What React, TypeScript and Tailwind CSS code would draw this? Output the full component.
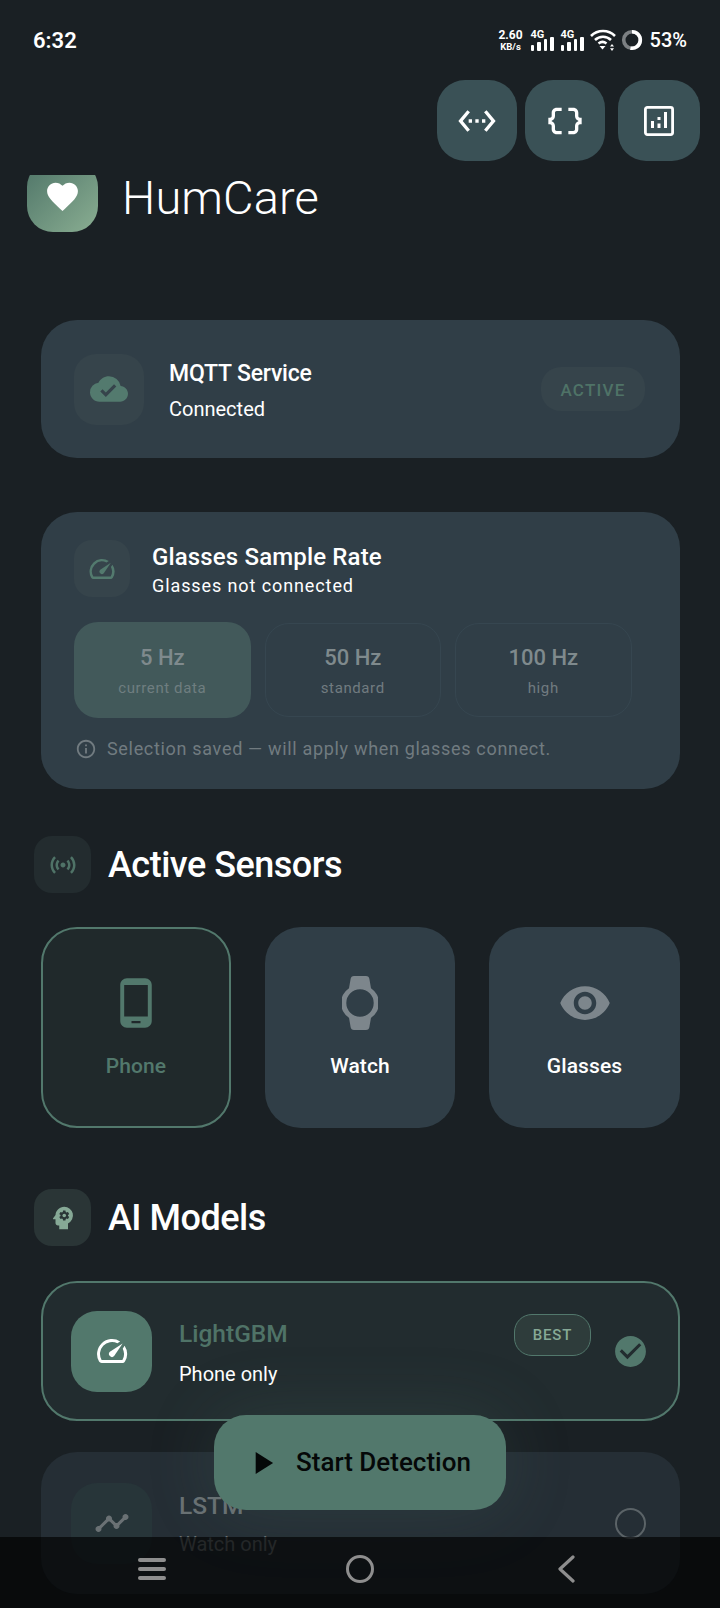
import {
  MdCheckCircle,
  MdCloudDone,
  MdDataObject,
  MdFavorite,
  MdInfoOutline,
  MdPhoneAndroid,
  MdPlayArrow,
  MdPsychology,
  MdSensors,
  MdSettingsEthernet,
  MdSpeed,
  MdTimeline,
  MdVisibility,
} from "react-icons/md";

const font = { fontFamily: "Roboto, sans-serif" };

function Signal() {
  return (
    <div className="relative flex h-[21px] w-[24px] items-end gap-[3px]">
      <span className="absolute top-0 left-0 text-[11px] leading-[9px] font-bold text-white">4G</span>
      <div className="h-[6px] w-[3.5px] rounded-[1px] bg-white" />
      <div className="h-[9px] w-[3.5px] rounded-[1px] bg-white" />
      <div className="h-[12px] w-[3.5px] rounded-[1px] bg-white" />
      <div className="h-[14px] w-[3.5px] rounded-[1px] bg-white" />
    </div>
  );
}

function StatusBar() {
  return (
    <div className="flex h-[80px] items-center justify-between pr-[33px] pl-[33px]">
      <span className="text-[22px] font-semibold text-white">6:32</span>
      <div className="flex items-center">
        <div className="mr-[9px] flex w-[22px] flex-col items-center font-bold text-white">
          <span className="text-[12px] leading-[12px]">2.60</span>
          <span className="mt-px text-[9.5px] leading-[10px]">KB/s</span>
        </div>
        <div className="mr-[6px]">
          <Signal />
        </div>
        <div className="mr-[5px]">
          <Signal />
        </div>
        <svg width="26" height="22" viewBox="0 0 26 22" className="mr-[5px]">
          <path d="M1 7a17 17 0 0 1 24 0" fill="none" stroke="white" strokeWidth="2.6" />
          <path d="M5 11a11.5 11.5 0 0 1 16 0" fill="none" stroke="white" strokeWidth="2.6" />
          <path d="M8.5 14.5a6.5 6.5 0 0 1 8 0" fill="none" stroke="white" strokeWidth="2.6" />
          <path d="M9.5 17h6l-3 3.5z" fill="white" />
          <path d="M22 15l2 2.4h-4zM22 22l2-2.8h-4z" fill="white" />
        </svg>
        <svg width="22" height="22" viewBox="0 0 22 22" className="mr-[7px]">
          <circle cx="11" cy="11" r="8.3" fill="none" stroke="#7c8083" strokeWidth="3.6" />
          <path d="M11 2.7A8.3 8.3 0 1 1 9.44 19.15" fill="none" stroke="white" strokeWidth="3.6" />
        </svg>
        <span className="text-[20px] font-medium text-white">53%</span>
      </div>
    </div>
  );
}

function AnalyticsIcon() {
  return (
    <svg width="30" height="30" viewBox="0 0 30 30" fill="white">
      <rect x="1.4" y="1.4" width="27.2" height="27.2" rx="2" fill="none" stroke="white" strokeWidth="2.8" />
      <rect x="7" y="15" width="3" height="7" />
      <rect x="13.5" y="11" width="3" height="3" />
      <rect x="13.5" y="17.5" width="3" height="4.5" />
      <rect x="20" y="6" width="3" height="16" />
    </svg>
  );
}

function TopActions() {
  const cls = "flex h-[81px] w-[80px] items-center justify-center rounded-[28px] bg-[#3a5156] text-white";
  return (
    <div className="flex justify-end pr-[20px]">
      <div className={cls}>
        <MdSettingsEthernet size={40} />
      </div>
      <div className={`${cls} ml-[8px]`}>
        <MdDataObject size={40} />
      </div>
      <div className={`${cls} ml-[13px] w-[82px]`}>
        <AnalyticsIcon />
      </div>
    </div>
  );
}

function Brand() {
  return (
    <div className="mt-[14px] flex h-[57px] items-center pl-[27px]">
      <div className="h-[57px] w-[71px] overflow-hidden">
        <div className="-mt-[14px] flex h-[71px] w-[71px] items-center justify-center rounded-[26px] bg-gradient-to-br from-[#4f7568] to-[#8aae92] text-white">
          <MdFavorite size={37} />
        </div>
      </div>
      <span className="-mt-[12px] ml-[24px] text-[47px] leading-none font-light tracking-[0.1px] text-white">
        HumCare
      </span>
    </div>
  );
}

function MqttCard() {
  return (
    <div className="mt-[88px] flex h-[138px] items-center rounded-[36px] bg-[#303e47] pr-[35px] pl-[33px]">
      <div className="flex h-[71px] w-[70px] items-center justify-center rounded-[22px] bg-[#36444b] text-[#537a6e]">
        <MdCloudDone size={38} />
      </div>
      <div className="ml-[25px] flex-1">
        <div className="mt-[2px] text-[23px] leading-[28px] font-medium tracking-[-0.2px] text-white">MQTT Service</div>
        <div className="mt-[9px] text-[20px] leading-[24px] text-white">Connected</div>
      </div>
      <div className="flex h-[44px] w-[104px] items-center justify-center rounded-[20px] bg-[#36444b] pt-[3px] text-[17px] font-medium tracking-[1.2px] text-[#4f7367]">
        ACTIVE
      </div>
    </div>
  );
}

const rates = [
  { hz: "5 Hz", sub: "current data", active: true },
  { hz: "50 Hz", sub: "standard", active: false },
  { hz: "100 Hz", sub: "high", active: false },
];

function SampleRateCard() {
  return (
    <div className="mt-[54px] h-[277px] rounded-[36px] bg-[#303e47] pt-[28px] pl-[33px]">
      <div className="flex">
        <div className="flex h-[57px] w-[56px] items-center justify-center rounded-[18px] bg-[#36444b] text-[#537a6e]">
          <MdSpeed size={30} />
        </div>
        <div className="ml-[22px] pt-[2px]">
          <div className="text-[24px] leading-[30px] font-medium tracking-[0.15px] text-white">Glasses Sample Rate</div>
          <div className="mt-px text-[18px] leading-[26px] tracking-[0.9px] text-white">Glasses not connected</div>
        </div>
      </div>
      <div className="mt-[23px] flex items-center gap-[14px]">
        {rates.map((r) =>
          r.active ? (
            <div key={r.hz} className="flex h-[96px] w-[176.5px] flex-col items-center rounded-[24px] bg-[#42595a] pt-[23px]">
              <span className="text-[22px] leading-[26px] font-medium text-[#7f8a8d]">{r.hz}</span>
              <span className="mt-[7px] text-[15px] leading-[20px] tracking-[0.6px] text-[#6f7e80]">{r.sub}</span>
            </div>
          ) : (
            <div key={r.hz} className="flex h-[94px] w-[176.5px] flex-col items-center rounded-[24px] border border-[#364650] pt-[21px]">
              <span className="text-[22px] leading-[26px] font-medium text-[#7f8a8d]">{r.hz}</span>
              <span className="mt-[7px] text-[15px] leading-[20px] tracking-[0.6px] text-[#717b80]">{r.sub}</span>
            </div>
          ),
        )}
      </div>
      <div className="mt-[18px] flex items-center text-[#717b80]">
        <MdInfoOutline size={22} className="ml-px" />
        <span className="ml-[10px] text-[18px] leading-[26px] tracking-[0.68px]">
          Selection saved — will apply when glasses connect.
        </span>
      </div>
    </div>
  );
}

function SectionHeader({ title, icon, box }: { title: string; icon: React.ReactNode; box: string }) {
  return (
    <div className="-ml-[7px] flex h-[57px] items-center">
      <div className={`flex h-[57px] w-[57px] items-center justify-center rounded-[18px] ${box}`}>{icon}</div>
      <h2 className="ml-[17px] text-[36px] leading-none font-medium tracking-[-0.5px] text-white">{title}</h2>
    </div>
  );
}

function WatchIcon() {
  return (
    <svg width="36" height="54" viewBox="0 0 36 54">
      <path
        fillRule="evenodd"
        fill="#7d868c"
        d="M12 0h12a3.5 3.5 0 0 1 3.4 3l1.6 9.2a17.8 17.8 0 0 1 0 29.6L27.4 51a3.5 3.5 0 0 1-3.4 3H12a3.5 3.5 0 0 1-3.4-3L7 41.8a17.8 17.8 0 0 1 0-29.6L8.6 3A3.5 3.5 0 0 1 12 0zM18 13.3a13.7 13.7 0 1 0 0 27.4 13.7 13.7 0 0 0 0-27.4z"
      />
    </svg>
  );
}

function SensorCard({
  label,
  icon,
  active,
  width,
}: {
  label: string;
  icon: React.ReactNode;
  active?: boolean;
  width: string;
}) {
  return (
    <div
      className={`flex h-[201px] flex-col items-center rounded-[36px] ${width} ${
        active ? "border-2 border-[#52786c] bg-[#20292b] pt-[42px] text-[#52786c]" : "bg-[#303e47] pt-[44px] text-white"
      }`}
    >
      <div className={`flex h-[64px] items-center justify-center ${active ? "" : "text-[#7d868c]"}`}>{icon}</div>
      <span className="mt-[17px] text-[21px] leading-[28px] font-medium tracking-[0.1px]">{label}</span>
    </div>
  );
}

function ModelCards() {
  return (
    <>
      <div className="relative mt-[35px] flex h-[140px] items-center rounded-[36px] border-2 border-[#52786c] bg-[#222c2f] pr-[29px] pl-[28px]">
        <div className="flex h-[81px] w-[81px] items-center justify-center rounded-[26px] bg-[#52786c] text-white">
          <MdSpeed size={36} />
        </div>
        <div className="ml-[27px] flex-1">
          <div className="mt-[2px] text-[24.5px] leading-[32px] font-medium text-[#4f7367]">LightGBM</div>
          <div className="mt-[12px] text-[20px] leading-[24px] text-white">Phone only</div>
        </div>
        <div className="-mt-[32px] mr-[21px] flex h-[42px] w-[77px] items-center justify-center rounded-[18px] border border-[#52786c] bg-[#2e3c3b] text-[15px] font-medium tracking-[0.8px] text-[#86a996]">
          BEST
        </div>
        <MdCheckCircle size={37} className="text-[#52786c]" />
      </div>
      <div className="mt-[31px] flex h-[142px] items-center rounded-[36px] bg-[#252e35] pr-[34px] pl-[30px]">
        <div className="flex h-[81px] w-[81px] items-center justify-center rounded-[26px] bg-[#273539] text-[#6a7174]">
          <MdTimeline size={36} />
        </div>
        <div className="ml-[27px] flex-1">
          <div className="text-[24.5px] leading-[32px] font-medium text-[#6a7174]">LSTM</div>
          <div className="mt-[10px] text-[20px] leading-[24px] text-[#6a7174]">Watch only</div>
        </div>
        <div className="h-[31px] w-[31px] rounded-full border-2 border-[#5b6367]" />
      </div>
    </>
  );
}

function NavBar() {
  return (
    <div className="absolute right-0 bottom-0 left-0 h-[71px] bg-black/65">
      <div className="flex h-full items-center pb-[7px]">
        <div className="ml-[138px] flex w-[28px] flex-col gap-[5px]">
          <div className="h-[4px] rounded-full bg-[#8e8e8e]" />
          <div className="h-[4px] rounded-full bg-[#8e8e8e]" />
          <div className="h-[4px] rounded-full bg-[#8e8e8e]" />
        </div>
        <div className="ml-[180px] h-[28px] w-[28px] rounded-full border-[3px] border-[#8e8e8e]" />
        <svg width="18" height="28" viewBox="0 0 18 28" className="ml-[183px]">
          <path d="M16 2L3 14l13 12" fill="none" stroke="#8e8e8e" strokeWidth="3.2" strokeLinecap="round" strokeLinejoin="round" />
        </svg>
      </div>
    </div>
  );
}

export default function App() {
  return (
    <div className="relative h-[1608px] w-[720px] overflow-hidden bg-[#1a2024]" style={font}>
      <StatusBar />
      <TopActions />
      <Brand />
      <div className="pr-[40px] pl-[41px]">
        <MqttCard />
        <SampleRateCard />
        <div className="mt-[47px]">
          <SectionHeader
            title="Active Sensors"
            box="bg-[#232c2f] text-[#4f7367]"
            icon={<MdSensors size={30} />}
          />
        </div>
        <div className="mt-[34px] flex gap-[34px]">
          <SensorCard active width="w-[190px]" label="Phone" icon={<MdPhoneAndroid size={54} />} />
          <SensorCard width="w-[190px]" label="Watch" icon={<WatchIcon />} />
          <SensorCard width="w-[191px]" label="Glasses" icon={<MdVisibility size={54} />} />
        </div>
        <div className="mt-[61px]">
          <SectionHeader
            title="AI Models"
            box="bg-[#2a3536] text-[#86a996]"
            icon={<MdPsychology size={30} />}
          />
        </div>
        <ModelCards />
      </div>
      <div className="absolute top-[1415px] left-[214px] flex h-[95px] w-[292px] items-center rounded-[32px] bg-[#52786c] pl-[29px] text-[#050808] shadow-[0_0_70px_rgba(82,120,108,0.2)]">
        <MdPlayArrow size={38} />
        <span className="ml-[15px] text-[26px] font-medium">Start Detection</span>
      </div>
      <NavBar />
    </div>
  );
}
